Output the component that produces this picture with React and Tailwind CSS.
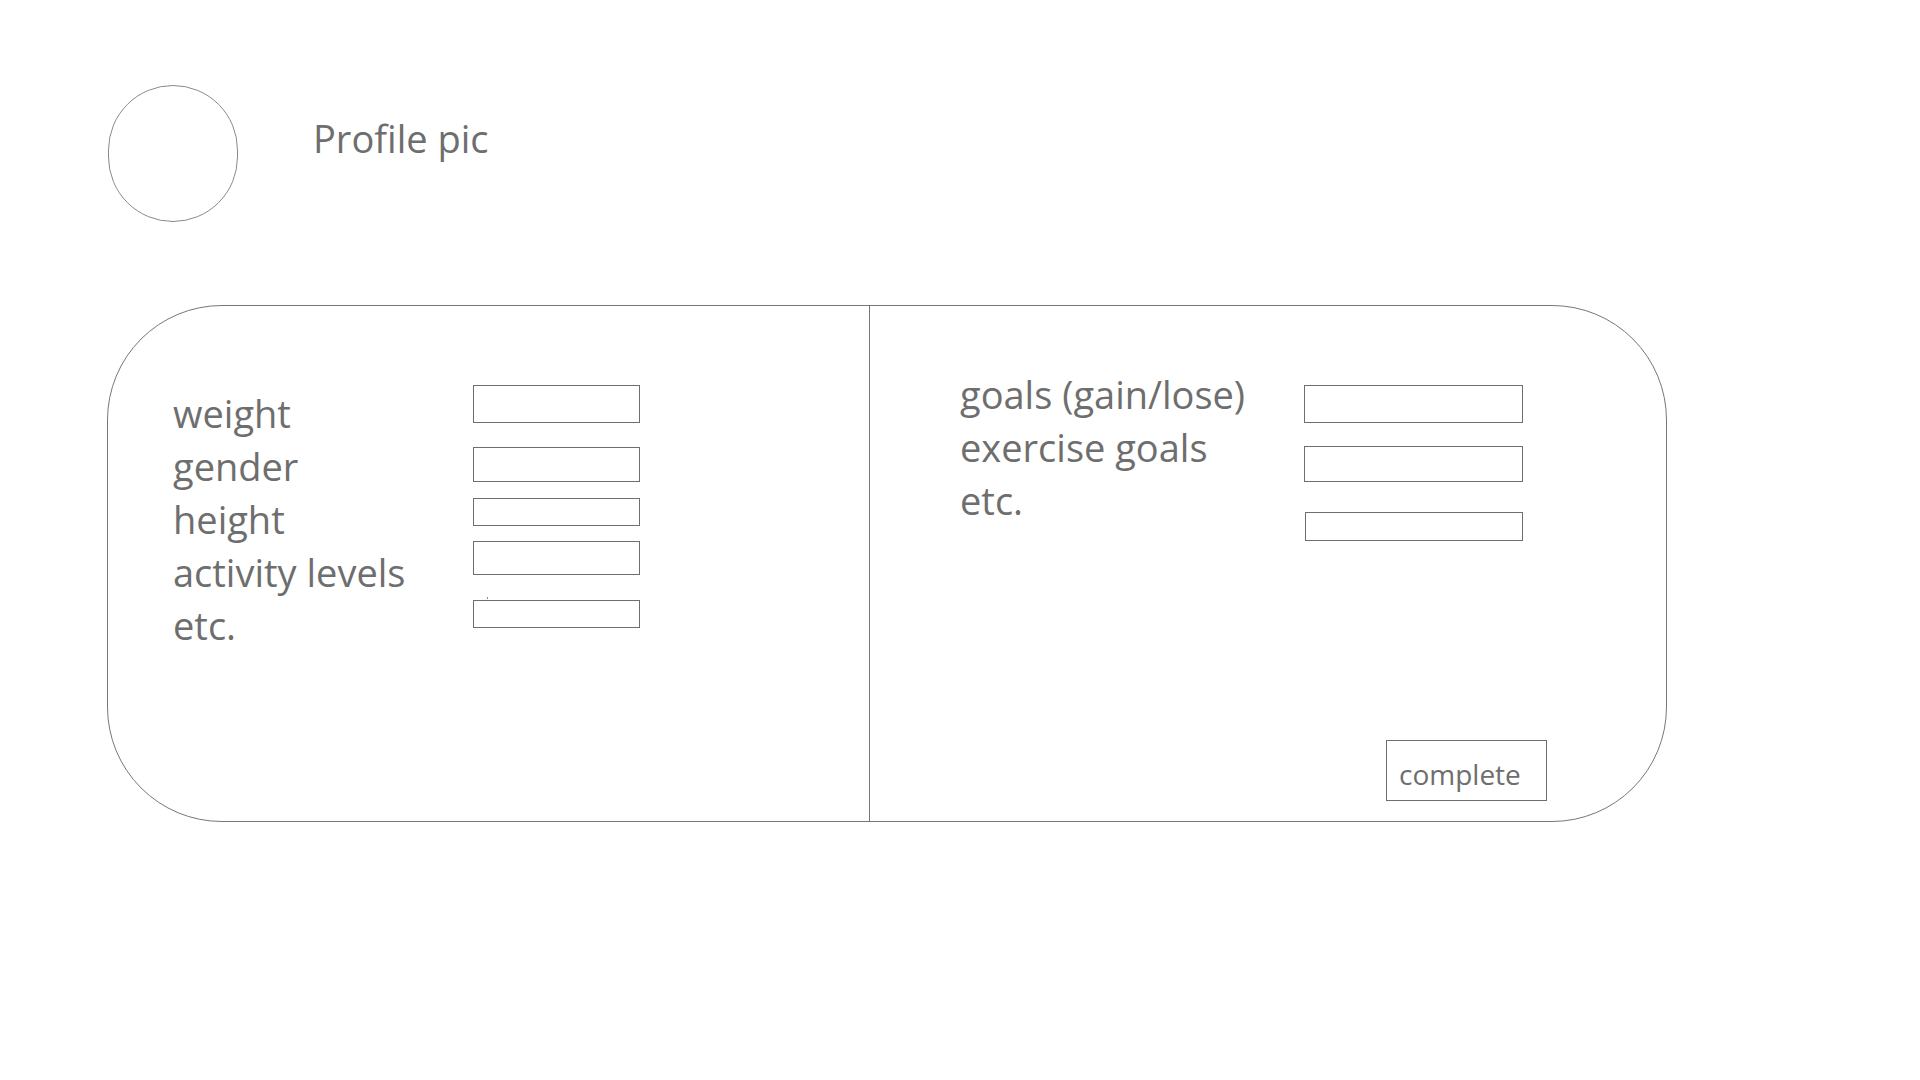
import React from 'react';

const leftFields = [
  { label: 'weight' },
  { label: 'gender' },
  { label: 'height' },
  { label: 'activity levels' },
  { label: 'etc.' },
];

const rightFields = ['goals (gain/lose)', 'exercise goals', 'etc.'];

const Box = ({ className }) => (
  <div className={`border border-[#6e6e6e] bg-white ${className}`} />
);

export default function App() {
  return (
    <div className="w-[1920px] h-[1080px] bg-white text-[#6e6e6e] font-['Open_Sans',sans-serif]">
      {/* Header: avatar + title */}
      <div className="flex items-start pl-[108px] pt-[85px]">
        <div className="w-[130px] h-[137px] rounded-full border border-[#8a8a8a]" />
        <div className="ml-[75px] mt-[27px] text-[38px] leading-[53px]">Profile pic</div>
      </div>

      {/* Main card */}
      <div className="ml-[107px] mt-[83px] w-[1560px] h-[517px] rounded-[115px] border border-[#777777] flex">
        {/* Left panel */}
        <div className="w-[762px] h-full border-r border-[#777777] flex items-start pl-[65px] pt-[79px]">
          <div className="w-[300px] mt-[2px] flex flex-col text-[38px] leading-[53px]">
            {leftFields.map((f) => (
              <span key={f.label}>{f.label}</span>
            ))}
          </div>
          <div className="flex flex-col">
            <Box className="w-[167px] h-[38px]" />
            <Box className="w-[167px] h-[35px] mt-[24px]" />
            <Box className="w-[167px] h-[28px] mt-[16px]" />
            <Box className="w-[167px] h-[34px] mt-[15px]" />
            <div className="w-px h-[2px] ml-[14px] mt-[22px] bg-[#8a8a8a]" />
            <Box className="w-[167px] h-[28px] mt-px" />
          </div>
        </div>

        {/* Right panel */}
        <div className="flex-1 h-full flex flex-col">
          <div className="flex items-start pl-[90px]">
            <div className="w-[344px] mt-[62px] flex flex-col text-[38px] leading-[53px]">
              {rightFields.map((l) => (
                <span key={l}>{l}</span>
              ))}
            </div>
            <div className="mt-[79px] flex flex-col">
              <Box className="w-[219px] h-[38px]" />
              <Box className="w-[219px] h-[36px] mt-[23px]" />
              <Box className="w-[218px] h-[29px] mt-[30px] ml-px" />
            </div>
          </div>
          <div className="mt-auto mb-[20px] ml-[516px]">
            <button className="w-[161px] h-[61px] border border-[#6e6e6e] bg-white flex items-center pl-[12px] pt-[7px] text-[28px] text-[#6e6e6e]">
              complete
            </button>
          </div>
        </div>
      </div>
    </div>
  );
}
